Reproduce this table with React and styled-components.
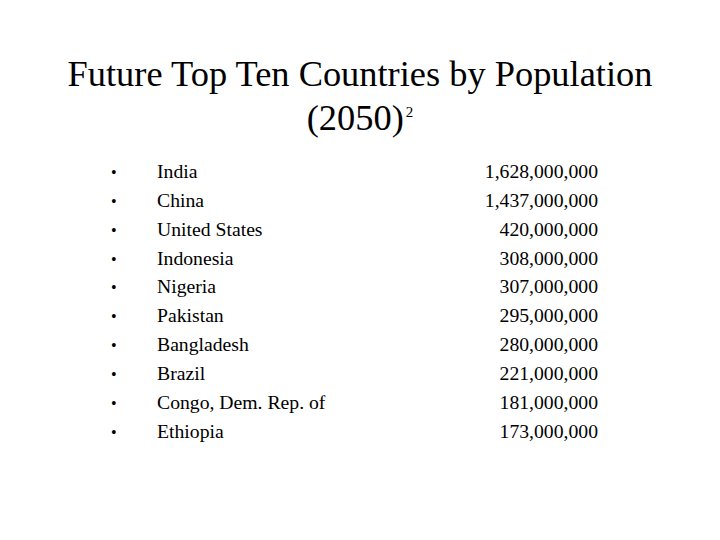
import styled, { createGlobalStyle } from 'styled-components';

const Global = createGlobalStyle`
  html, body { margin: 0; padding: 0; background: #fff; }
  body { font-family: "Liberation Serif", "Times New Roman", serif; color: #000; }
`;

const Slide = styled.div`
  width: 720px;
  height: 540px;
  display: flex;
  flex-direction: column;
  align-items: center;
  background: #fff;
`;

const Title = styled.h1`
  margin: 52px 0 0;
  font-size: 36.4px;
  font-weight: normal;
  line-height: 44px;
  text-align: center;
  sup {
    font-size: 15px;
    vertical-align: 0;
    position: relative;
    top: -13px;
    margin-left: 2px;
  }
`;

const List = styled.ul`
  list-style: none;
  margin: 10px 0 0;
  padding: 0;
  width: 720px;
`;

const Row = styled.li`
  display: grid;
  grid-template-columns: 111px 46px 1fr 122px;
  height: 28.85px;
  line-height: 28.85px;
  align-items: baseline;
  font-size: 19.7px;
`;

const Bullet = styled.span`
  grid-column: 2;
  grid-row: 1;
  font-size: 16px;
`;

const Name = styled.span`
  grid-column: 3;
  grid-row: 1;
`;

const Value = styled.span`
  grid-column: 3;
  grid-row: 1;
  justify-self: end;
`;

const data = [
  ['India', '1,628,000,000'],
  ['China', '1,437,000,000'],
  ['United States', '420,000,000'],
  ['Indonesia', '308,000,000'],
  ['Nigeria', '307,000,000'],
  ['Pakistan', '295,000,000'],
  ['Bangladesh', '280,000,000'],
  ['Brazil', '221,000,000'],
  ['Congo, Dem. Rep. of', '181,000,000'],
  ['Ethiopia', '173,000,000'],
];

export default function App() {
  return (
    <Slide>
      <Global />
      <Title>
        Future Top Ten Countries by Population
        <br />
        (2050)<sup>2</sup>
      </Title>
      <List>
        {data.map(([name, value]) => (
          <Row key={name}>
            <Bullet>•</Bullet>
            <Name>{name}</Name>
            <Value>{value}</Value>
          </Row>
        ))}
      </List>
    </Slide>
  );
}
